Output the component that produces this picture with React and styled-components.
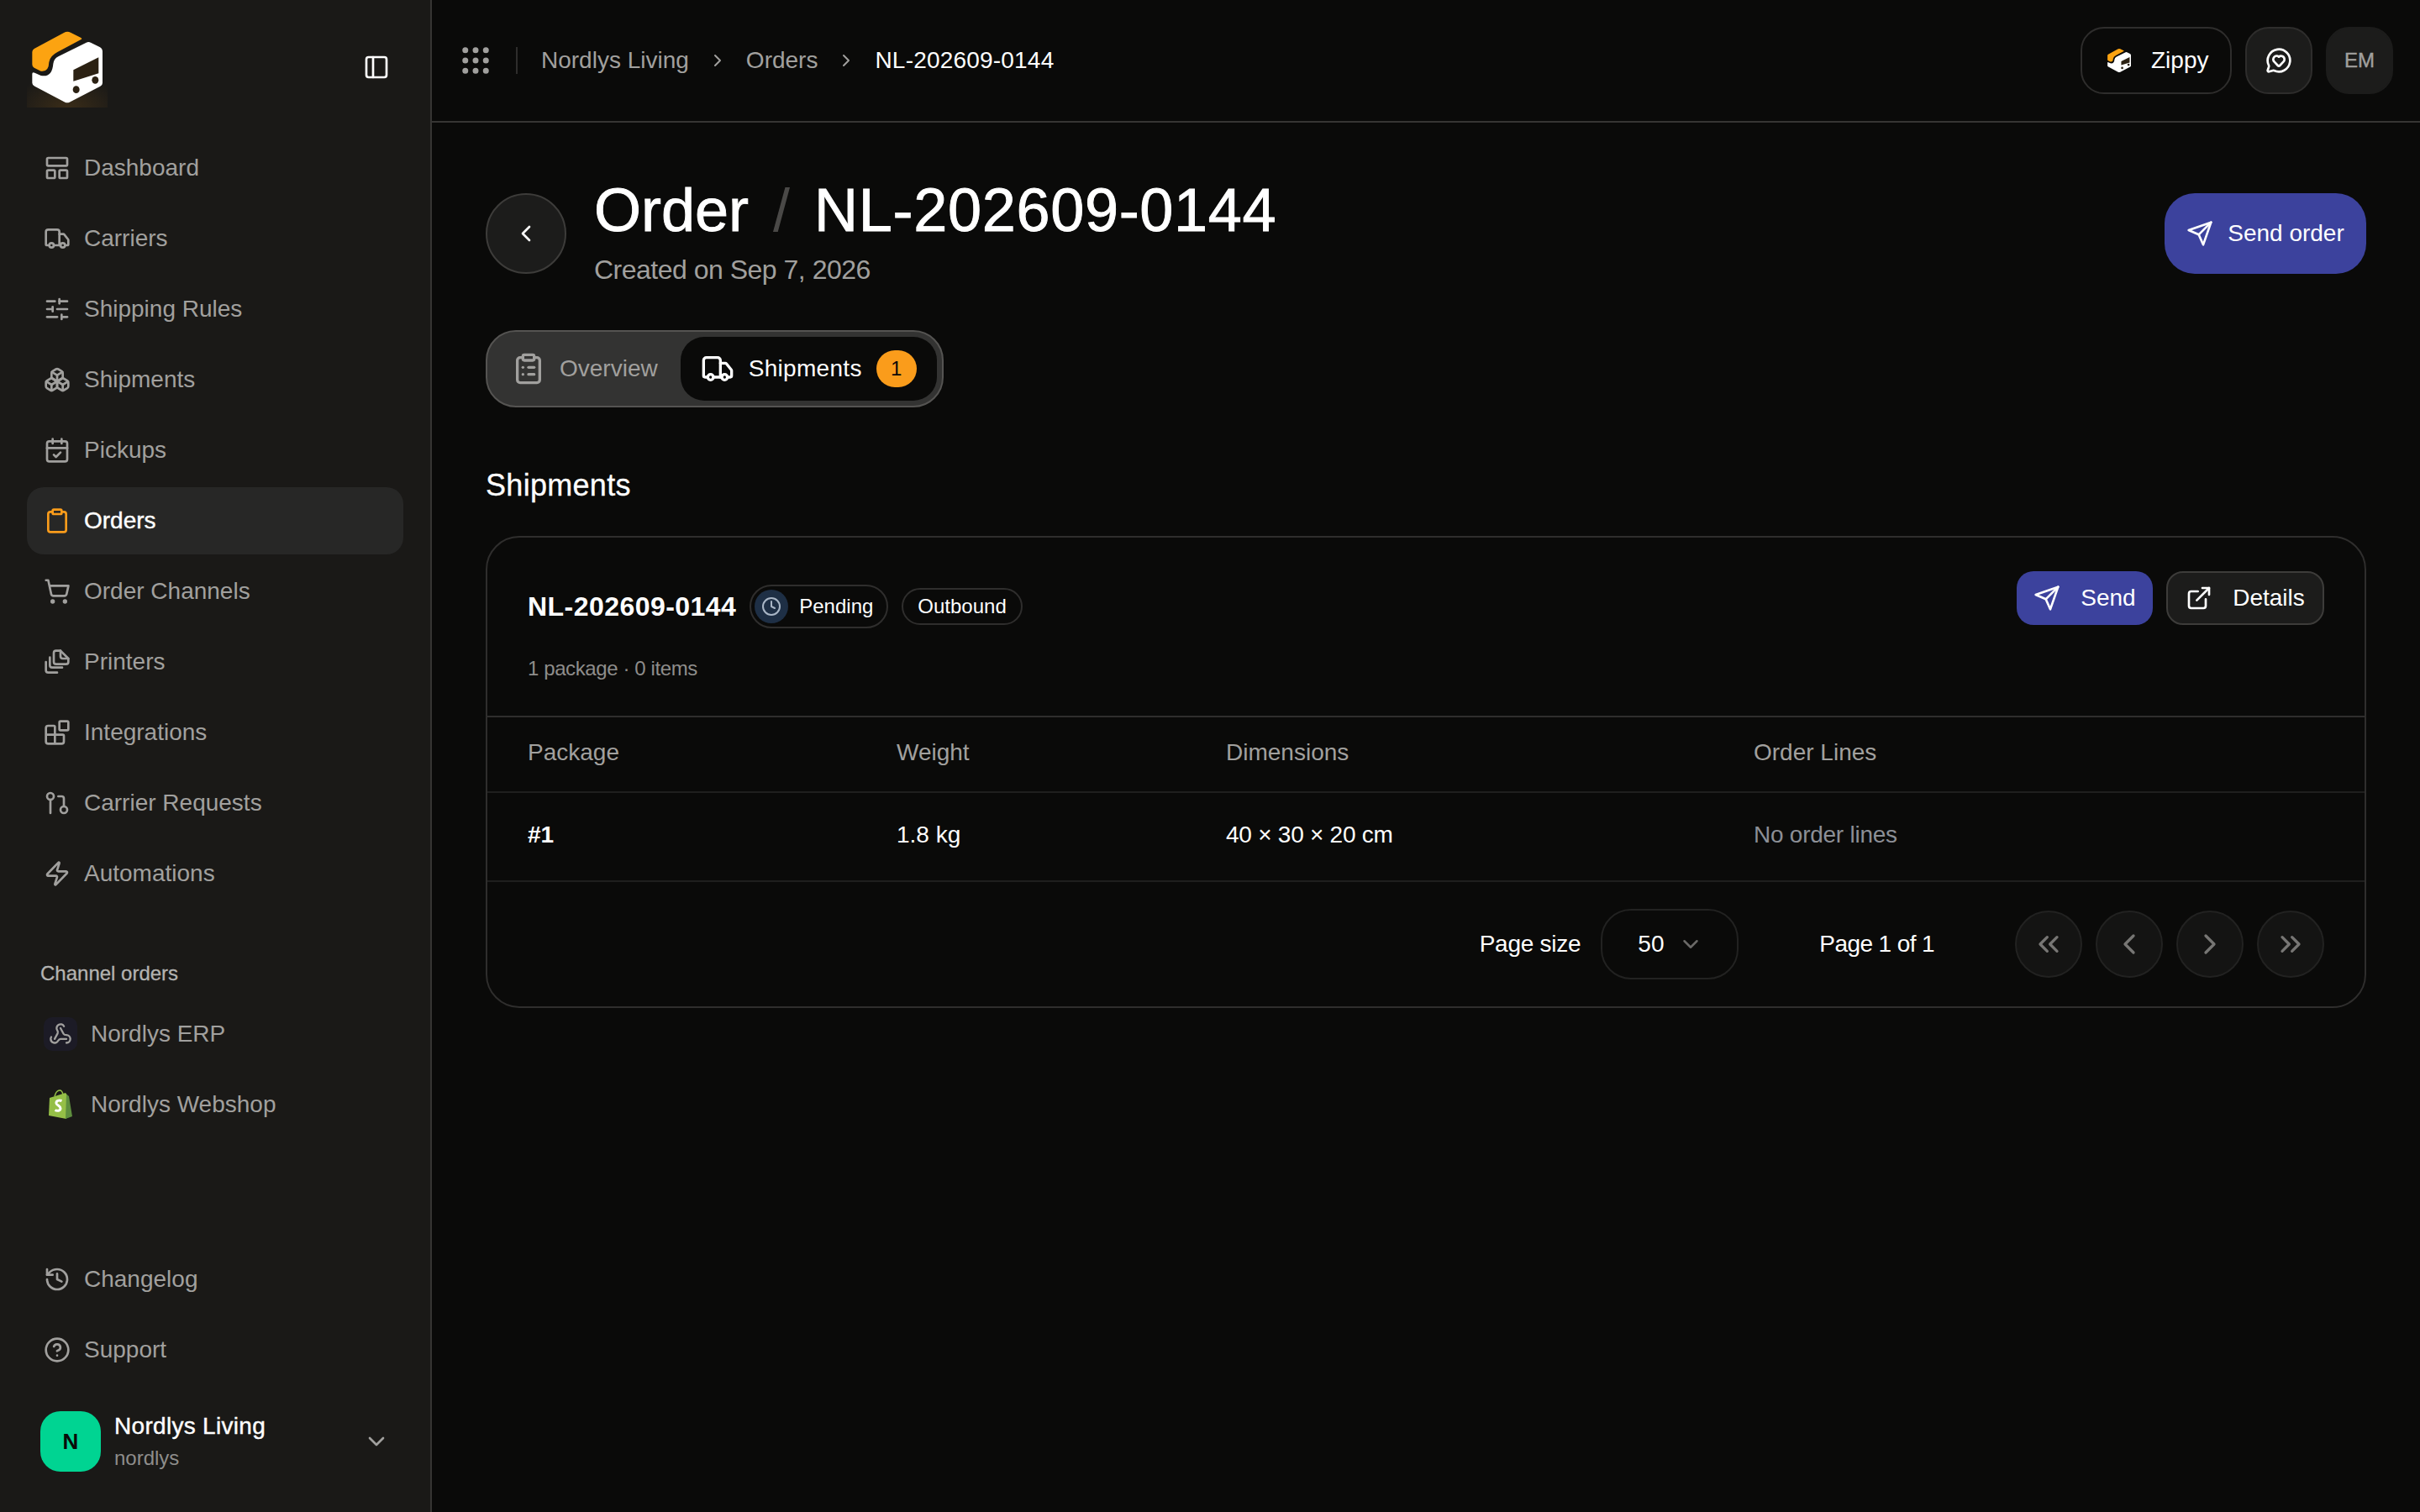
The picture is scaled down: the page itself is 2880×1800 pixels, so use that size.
import styled, { createGlobalStyle } from 'styled-components'
import {
  Blocks,
  Boxes,
  CalendarCheck,
  ChevronDown,
  ChevronLeft,
  ChevronRight,
  ChevronsLeft,
  ChevronsRight,
  CircleHelp,
  Clipboard,
  ClipboardList,
  Clock,
  ExternalLink,
  GitPullRequest,
  Grip,
  History,
  LayoutPanelTop,
  MessageCircleHeart,
  PanelLeft,
  SlidersHorizontal,
  Truck,
  Webhook,
  Zap,
} from 'lucide-react'

const GlobalStyle = createGlobalStyle`
  html, body {
    margin: 0;
    padding: 0;
    background: #0a0a09;
  }
  * {
    box-sizing: border-box;
  }
  body {
    font-family: "Liberation Sans", Arial, sans-serif;
    color: #fff;
  }
`

const Shell = styled.div`
  display: flex;
  width: 2880px;
  height: 1800px;
  overflow: hidden;
  background: #0a0a09;
`

const Sidebar = styled.aside`
  width: 514px;
  flex-shrink: 0;
  height: 100%;
  display: flex;
  flex-direction: column;
  background: #1a1917;
  border-right: 2px solid #363533;
`
const SideTop = styled.div`
  display: flex;
  align-items: center;
  justify-content: space-between;
  padding: 32px 48px 0 32px;
  height: 128px;
  margin-bottom: 32px;
  color: #fff;
`
const LogoBox = styled.div`
  width: ${(props) => props.size}px;
  height: ${(props) => props.size}px;
  display: flex;
  background: ${(props) =>
    props.glow ? 'radial-gradient(ellipse 70% 40% at 50% 100%, rgba(250, 160, 30, 0.14), transparent)' : 'none'};
`
const NavList = styled.nav`
  display: flex;
  flex-direction: column;
  gap: 4px;
  padding: 0 32px;
`
const NavItem = styled.a`
  height: 80px;
  display: flex;
  align-items: center;
  gap: 16px;
  padding-left: 20px;
  border-radius: 20px;
  font-size: 28px;
  color: ${(props) => (props.active ? '#fff' : '#a1a09e')};
  background: ${(props) => (props.active ? '#272726' : 'transparent')};
  -webkit-text-stroke: ${(props) => (props.active ? '0.4px' : '0')};
  svg {
    flex-shrink: 0;
    color: ${(props) => (props.active ? '#fa9c1b' : '#a1a09e')};
  }
`
const SideLabel = styled.div`
  margin: 63px 0 16px 48px;
  height: 32px;
  line-height: 32px;
  font-size: 24px;
  color: #b4b3b1;
  -webkit-text-stroke: 0.3px;
`
const ChannelIcon = styled.span`
  width: 40px;
  height: 40px;
  display: flex;
  align-items: center;
  justify-content: center;
  border-radius: 10px;
  background: ${(props) => props.tint || 'transparent'};
`
const SideBottom = styled.div`
  margin-top: auto;
  padding-bottom: 48px;
`
const Account = styled.div`
  display: flex;
  align-items: center;
  margin-top: 33px;
  padding: 0 48px;
  color: #a1a09e;
`
const Avatar = styled.div`
  width: 72px;
  height: 72px;
  border-radius: 24px;
  background: #00d492;
  color: #0a0a09;
  font-size: 26px;
  font-weight: 700;
  display: flex;
  align-items: center;
  justify-content: center;
`
const AccountText = styled.div`
  flex: 1;
  margin-left: 16px;
`
const AccountName = styled.div`
  font-size: 28px;
  line-height: 36px;
  color: #fff;
  letter-spacing: 0.3px;
  -webkit-text-stroke: 0.4px;
`
const AccountSlug = styled.div`
  font-size: 24px;
  line-height: 32px;
  margin-top: 4px;
  color: #8e8d8b;
`

const Main = styled.main`
  flex: 1;
  min-width: 0;
  display: flex;
  flex-direction: column;
`
const Header = styled.header`
  height: 146px;
  flex-shrink: 0;
  display: flex;
  align-items: center;
  padding: 0 32px 0 31px;
  border-bottom: 2px solid #363533;
`
const GripWrap = styled.span`
  display: flex;
  color: #a1a09e;
`
const HeaderDivider = styled.span`
  width: 2px;
  height: 32px;
  margin: 0 28px 0 27px;
  background: #2e2d2c;
`
const Crumbs = styled.div`
  display: flex;
  align-items: center;
  gap: 22px;
  font-size: 28px;
  color: #a1a09e;
  svg {
    color: #a1a09e;
  }
`
const Crumb = styled.span`
  letter-spacing: ${(props) => props.spacing || 0}px;
  color: ${(props) => (props.current ? '#fff' : '#a1a09e')};
`
const HeaderRight = styled.div`
  margin-left: auto;
  display: flex;
  align-items: center;
  gap: 16px;
`
const ZippyButton = styled.button`
  width: 180px;
  height: 80px;
  display: flex;
  align-items: center;
  gap: 22px;
  padding: 0 0 0 28px;
  border-radius: 28px;
  border: 2px solid #2e2d2c;
  background: transparent;
  color: #fff;
  font: inherit;
  font-size: 28px;
`
const SquareButton = styled.button`
  width: 80px;
  height: 80px;
  display: flex;
  align-items: center;
  justify-content: center;
  border-radius: 28px;
  border: 2px solid ${(props) => (props.plain ? '#1c1c1b' : '#2e2d2c')};
  background: #1c1c1b;
  color: ${(props) => (props.plain ? '#a1a09e' : '#fff')};
  font: inherit;
  font-size: 24px;
  -webkit-text-stroke: ${(props) => (props.plain ? '0.4px' : '0')};
`

const Content = styled.div`
  flex: 1;
  padding: 64px;
`
const TitleRow = styled.div`
  display: flex;
  align-items: center;
  justify-content: space-between;
`
const TitleLeft = styled.div`
  display: flex;
  align-items: center;
  gap: 33px;
`
const BackButton = styled.button`
  width: 96px;
  height: 96px;
  display: flex;
  align-items: center;
  justify-content: center;
  border-radius: 50%;
  border: 2px solid #3d3c3a;
  background: #1c1c1b;
  color: #fff;
`
const Title = styled.h1`
  margin: 0;
  height: 80px;
  line-height: 80px;
  font-size: 72px;
  font-weight: 400;
  color: #fff;
  display: flex;
  -webkit-text-stroke: 0.9px;
`
const TitleSlash = styled.span`
  margin: 0 29px;
  color: #4a4947;
  -webkit-text-stroke: 0;
`
const TitleCode = styled.span`
  letter-spacing: 0.7px;
`
const Subtitle = styled.div`
  margin-top: 8px;
  height: 47px;
  line-height: 46px;
  font-size: 32px;
  letter-spacing: -0.5px;
  color: #a1a09e;
`
const PrimaryButton = styled.button`
  display: flex;
  align-items: center;
  justify-content: center;
  border: none;
  background: #3c429d;
  color: #fff;
  font: inherit;
  font-size: 28px;
  width: ${(props) => (props.large ? '240px' : '162px')};
  height: ${(props) => (props.large ? '96px' : '64px')};
  gap: ${(props) => (props.large ? '17px' : '24px')};
  border-radius: ${(props) => (props.large ? '36px' : '20px')};
`
const TabBar = styled.div`
  display: inline-flex;
  margin-top: 48px;
  height: 92px;
  padding: 6px;
  border: 2px solid #555452;
  border-radius: 36px;
  background: #333332;
`
const Tab = styled.div`
  display: flex;
  align-items: center;
  gap: 17px;
  padding: ${(props) => (props.active ? '0 24px' : '0 27px 0 23px')};
  border-radius: 28px;
  font-size: 28px;
  letter-spacing: ${(props) => (props.active ? '0.3px' : '0')};
  color: ${(props) => (props.active ? '#fff' : '#a1a09e')};
  background: ${(props) => (props.active ? '#0a0a09' : 'transparent')};
`
const TabCount = styled.span`
  min-width: 48px;
  height: 44px;
  display: flex;
  align-items: center;
  justify-content: center;
  border-radius: 22px;
  background: #fa9c1b;
  color: #0a0a09;
  font-size: 24px;
`
const SectionTitle = styled.h2`
  margin: 69px 0 36px;
  height: 48px;
  line-height: 48px;
  font-size: 36px;
  font-weight: 400;
  letter-spacing: 0.3px;
  color: #fff;
  -webkit-text-stroke: 0.3px;
`
const Card = styled.section`
  border: 2px solid #2f2e2d;
  border-radius: 40px;
  height: 562px;
`
const CardHeader = styled.div`
  display: flex;
  align-items: flex-start;
  justify-content: space-between;
  height: 214px;
  padding: 40px 48px 0;
  border-bottom: 2px solid #2f2e2d;
`
const CardHeading = styled.div`
  padding-top: 16px;
`
const HeadingRow = styled.div`
  display: flex;
  align-items: center;
  gap: 16px;
  height: 52px;
`
const ShipmentCode = styled.span`
  font-size: 32px;
  font-weight: 700;
  letter-spacing: 0.45px;
`
const Pill = styled.span`
  display: flex;
  align-items: center;
  height: ${(props) => (props.withIcon ? '52px' : '44px')};
  padding: ${(props) => (props.withIcon ? '0 16px 0 4px' : '0 17px')};
  gap: 13px;
  border-radius: 26px;
  border: 2px solid #2f2e2d;
  font-size: 24px;
  color: #fff;
`
const PillIcon = styled.span`
  width: 40px;
  height: 40px;
  display: flex;
  align-items: center;
  justify-content: center;
  border-radius: 50%;
  background: #1e2f45;
  color: #a9b6c6;
`
const CardMeta = styled.div`
  margin-top: 32px;
  line-height: 32px;
  font-size: 24px;
  letter-spacing: -0.4px;
  color: #8e8d8b;
`
const CardActions = styled.div`
  display: flex;
  gap: 16px;
`
const GhostButton = styled.button`
  width: 188px;
  height: 64px;
  display: flex;
  align-items: center;
  justify-content: center;
  gap: 24px;
  border-radius: 20px;
  border: 2px solid #3d3c3a;
  background: #1c1c1b;
  color: #fff;
  font: inherit;
  font-size: 28px;
`
const TableRow = styled.div`
  display: grid;
  grid-template-columns: 439px 392px 628px 1fr;
  align-items: center;
  height: ${(props) => props.height}px;
  padding-left: 48px;
  padding-bottom: 4px;
  border-bottom: 2px solid #1f1f1e;
  font-size: 28px;
  color: ${(props) => (props.head ? '#a1a09e' : '#fff')};
`
const Tight = styled.span`
  letter-spacing: -0.25px;
`
const PackageId = styled.span`
  font-weight: 700;
`
const Muted = styled(Tight)`
  color: #8c8f96;
`
const CardFooter = styled.div`
  display: flex;
  align-items: center;
  justify-content: flex-end;
  height: 148px;
  padding-right: 48px;
  font-size: 28px;
  color: #fff;
`
const PageSize = styled.button`
  width: 164px;
  height: 84px;
  margin-left: 24px;
  display: flex;
  align-items: center;
  gap: 16px;
  padding-left: 42px;
  border-radius: 36px;
  border: 2px solid #222221;
  background: transparent;
  color: #fff;
  font: inherit;
  svg {
    color: #6a6967;
  }
`
const PageCount = styled.span`
  margin: 0 96px;
  letter-spacing: -0.6px;
`
const Pager = styled.div`
  display: flex;
  gap: 16px;
`
const PagerButton = styled.button`
  width: 80px;
  height: 80px;
  display: flex;
  align-items: center;
  justify-content: center;
  border-radius: 50%;
  border: 2px solid #222221;
  background: #141413;
  color: #777674;
`

const LogoMark = ({ size, glow }) => (
  <LogoBox size={size} glow={glow}>
    <svg width={size} height={size} viewBox='96 96 288 288'>
      <path
        d='M122 174 L228 117 Q240 110 252 116 L288 134 Q296 138 288 142 L205 186 Q178 200 175 222 Q174 258 146 254 L122 242 Q115 238 115 230 L115 186 Q115 178 122 174 Z'
        fill='#fca311'
      />
      <path
        d='M115 264 Q115 256 124 260 L146 270 Q186 278 190 228 Q192 210 208 202 L308 152 Q316 148 324 152 L356 168 Q366 174 366 184 L366 296 Q366 304 358 308 L248 365 Q240 369 232 365 L124 308 Q115 304 115 296 Z'
        fill='#fff'
      />
      <path d='M262 250 L352 205 L352 262 L262 290 Z' fill='#2b2113' />
      <ellipse cx='272' cy='320' rx='12' ry='13' fill='#2b2113' />
      <ellipse cx='340' cy='286' rx='12' ry='13' fill='#2b2113' />
    </svg>
  </LogoBox>
)

const Stroke = ({ size = 32, children }) => (
  <svg width={size} height={size} viewBox='0 0 24 24' fill='none' stroke='currentColor' strokeWidth='2' strokeLinecap='round' strokeLinejoin='round'>
    {children}
  </svg>
)

const PagesIcon = ({ size }) => (
  <Stroke size={size}>
    <path d='M15 2h-4a2 2 0 0 0-2 2v8a2 2 0 0 0 2 2h9a2 2 0 0 0 2-2V9z' />
    <path d='M15 2v5a2 2 0 0 0 2 2h5' />
    <path d='M5.500 8v7a2 2 0 0 0 2 2h9' />
    <path d='M2 12v7.500a2 2 0 0 0 2 2h8' />
  </Stroke>
)

const CartIcon = ({ size }) => (
  <Stroke size={size}>
    <circle cx='8' cy='21' r='1' />
    <circle cx='19' cy='21' r='1' />
    <path d='M2.050 2.050h2l2.660 12.420a2 2 0 0 0 2 1.580h9.780a2 2 0 0 0 1.950-1.570l1.650-7.430H5.120' />
  </Stroke>
)

const PlaneIcon = ({ size }) => (
  <Stroke size={size}>
    <path d='m22 2-7 20-4-9-9-4Z' />
    <path d='M22 2 11 13' />
  </Stroke>
)

const ShopifyIcon = () => (
  <svg width='40' height='40' viewBox='0 0 40 40'>
    <path d='M13 10 Q15 3 19 3 Q22 3 23 8' fill='none' stroke='#95bf47' strokeWidth='1.5' />
    <path d='M7 12 L26 6 L28 9 L27 37 L6 33 Z' fill='#95bf47' />
    <path d='M27 7.500 L30 10 L34 34 L26 37 Z' fill='#5e8e3e' />
    <path d='M21.500 15.500 C18 14 14.500 15.500 15 18.500 C15.500 21 20 21.500 20 24.500 C20 27.500 16 28 13.500 26.500' fill='none' stroke='#fff' strokeWidth='3' />
  </svg>
)

const navItems = [
  ['Dashboard', LayoutPanelTop],
  ['Carriers', Truck],
  ['Shipping Rules', SlidersHorizontal],
  ['Shipments', Boxes],
  ['Pickups', CalendarCheck],
  ['Orders', Clipboard],
  ['Order Channels', CartIcon],
  ['Printers', PagesIcon],
  ['Integrations', Blocks],
  ['Carrier Requests', GitPullRequest],
  ['Automations', Zap],
]

const pagerIcons = [ChevronsLeft, ChevronLeft, ChevronRight, ChevronsRight]

const App = () => {
  return (
    <Shell>
      <GlobalStyle />
      <Sidebar>
        <SideTop>
          <LogoMark size={96} glow />
          <PanelLeft size={32} />
        </SideTop>
        <NavList>
          {navItems.map(([label, Icon]) => (
            <NavItem key={label} active={label === 'Orders'}>
              <Icon size={32} />
              {label}
            </NavItem>
          ))}
        </NavList>
        <SideLabel>Channel orders</SideLabel>
        <NavList>
          <NavItem>
            <ChannelIcon tint='#1c1b26'>
              <Webhook size={28} />
            </ChannelIcon>
            Nordlys ERP
          </NavItem>
          <NavItem>
            <ChannelIcon>
              <ShopifyIcon />
            </ChannelIcon>
            Nordlys Webshop
          </NavItem>
        </NavList>
        <SideBottom>
          <NavList>
            <NavItem>
              <History size={32} />
              Changelog
            </NavItem>
            <NavItem>
              <CircleHelp size={32} />
              Support
            </NavItem>
          </NavList>
          <Account>
            <Avatar>N</Avatar>
            <AccountText>
              <AccountName>Nordlys Living</AccountName>
              <AccountSlug>nordlys</AccountSlug>
            </AccountText>
            <ChevronDown size={32} />
          </Account>
        </SideBottom>
      </Sidebar>

      <Main>
        <Header>
          <GripWrap>
            <Grip size={42} />
          </GripWrap>
          <HeaderDivider />
          <Crumbs>
            <Crumb>Nordlys Living</Crumb>
            <ChevronRight size={24} />
            <Crumb>Orders</Crumb>
            <ChevronRight size={24} />
            <Crumb current spacing={0.2}>NL-202609-0144</Crumb>
          </Crumbs>
          <HeaderRight>
            <ZippyButton>
              <LogoMark size={32} />
              Zippy
            </ZippyButton>
            <SquareButton>
              <MessageCircleHeart size={32} />
            </SquareButton>
            <SquareButton plain>EM</SquareButton>
          </HeaderRight>
        </Header>

        <Content>
          <TitleRow>
            <TitleLeft>
              <BackButton>
                <ChevronLeft size={32} />
              </BackButton>
              <div>
                <Title>
                  Order<TitleSlash>/</TitleSlash>
                  <TitleCode>NL-202609-0144</TitleCode>
                </Title>
                <Subtitle>Created on Sep 7, 2026</Subtitle>
              </div>
            </TitleLeft>
            <PrimaryButton large>
              <PlaneIcon size={32} />
              Send order
            </PrimaryButton>
          </TitleRow>

          <TabBar>
            <Tab>
              <ClipboardList size={40} />
              Overview
            </Tab>
            <Tab active>
              <Truck size={40} />
              Shipments
              <TabCount>1</TabCount>
            </Tab>
          </TabBar>

          <SectionTitle>Shipments</SectionTitle>

          <Card>
            <CardHeader>
              <CardHeading>
                <HeadingRow>
                  <ShipmentCode>NL-202609-0144</ShipmentCode>
                  <Pill withIcon>
                    <PillIcon>
                      <Clock size={24} />
                    </PillIcon>
                    Pending
                  </Pill>
                  <Pill>Outbound</Pill>
                </HeadingRow>
                <CardMeta>1 package · 0 items</CardMeta>
              </CardHeading>
              <CardActions>
                <PrimaryButton>
                  <PlaneIcon size={32} />
                  Send
                </PrimaryButton>
                <GhostButton>
                  <ExternalLink size={32} />
                  Details
                </GhostButton>
              </CardActions>
            </CardHeader>
            <TableRow head height={90}>
              <span>Package</span>
              <span>Weight</span>
              <span>Dimensions</span>
              <span>Order Lines</span>
            </TableRow>
            <TableRow height={106}>
              <PackageId>#1</PackageId>
              <span>1.8 kg</span>
              <Tight>40 × 30 × 20 cm</Tight>
              <Muted>No order lines</Muted>
            </TableRow>
            <CardFooter>
              <Tight>Page size</Tight>
              <PageSize>
                50
                <ChevronDown size={30} />
              </PageSize>
              <PageCount>Page 1 of 1</PageCount>
              <Pager>
                {pagerIcons.map((Icon, i) => (
                  <PagerButton key={i}>
                    <Icon size={40} />
                  </PagerButton>
                ))}
              </Pager>
            </CardFooter>
          </Card>
        </Content>
      </Main>
    </Shell>
  )
}

export default App
